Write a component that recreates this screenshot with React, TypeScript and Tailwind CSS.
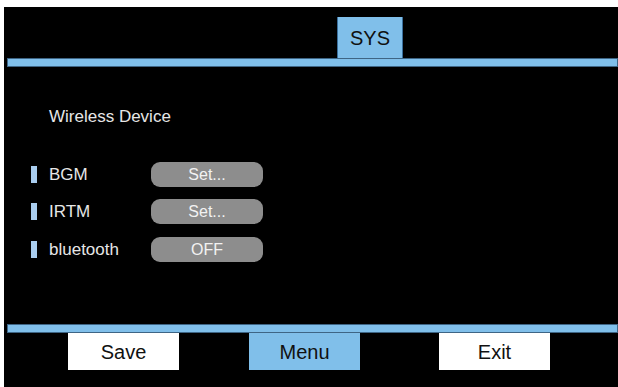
import React from "react";

const font = { fontFamily: '"Liberation Sans", Arial, sans-serif' };

function Row({ label, value }: { label: string; value: string }) {
  return (
    <div className="flex h-[25px] items-center">
      <div className="ml-[27px] h-[17px] w-[6px] bg-[#a9cdef]" />
      <div className="ml-[12px] w-[102px] text-[17px] leading-none text-[#e6e6e6]">{label}</div>
      <div className="flex h-[25px] w-[112px] items-center justify-center rounded-[9px] bg-[#8d8d8d] text-[16px] leading-none text-[#f2f2f2]">
        {value}
      </div>
    </div>
  );
}

function BottomButton({ label, active }: { label: string; active?: boolean }) {
  return (
    <div
      className={
        "flex h-[37px] w-[111px] items-center justify-center text-[20px] leading-none text-[#111] " +
        (active ? "bg-[#80bfea]" : "bg-white")
      }
    >
      {label}
    </div>
  );
}

export default function App() {
  return (
    <div className="h-[387px] w-[618px] bg-white pl-[4px] pt-[7px]" style={font}>
      <div className="flex h-full flex-col bg-black">
        <div className="flex h-[51px] items-end pl-[333px]">
          <div className="flex h-[41px] w-[66px] items-center justify-center border-x border-[#3a6f9c] bg-[#80bfea] text-[20px] leading-none text-[#111]">
            SYS
          </div>
        </div>
        <div className="ml-[3px] h-[9px] border border-[#3e6585] bg-[#80bfea]" />
        <div className="flex-1">
          <div className="ml-[45px] mt-[41px] text-[17px] leading-none text-[#e6e6e6]">Wireless Device</div>
          <div className="mt-[37px] flex flex-col">
            <Row label="BGM" value="Set..." />
            <div className="mt-[12px]">
              <Row label="IRTM" value="Set..." />
            </div>
            <div className="mt-[13px]">
              <Row label="bluetooth" value="OFF" />
            </div>
          </div>
        </div>
        <div className="ml-[3px] h-[9px] border border-[#3e6585] bg-[#80bfea]" />
        <div className="flex h-[54px] items-start">
          <div className="ml-[64px]">
            <BottomButton label="Save" />
          </div>
          <div className="ml-[70px]">
            <BottomButton label="Menu" active />
          </div>
          <div className="ml-[79px]">
            <BottomButton label="Exit" />
          </div>
        </div>
      </div>
    </div>
  );
}
